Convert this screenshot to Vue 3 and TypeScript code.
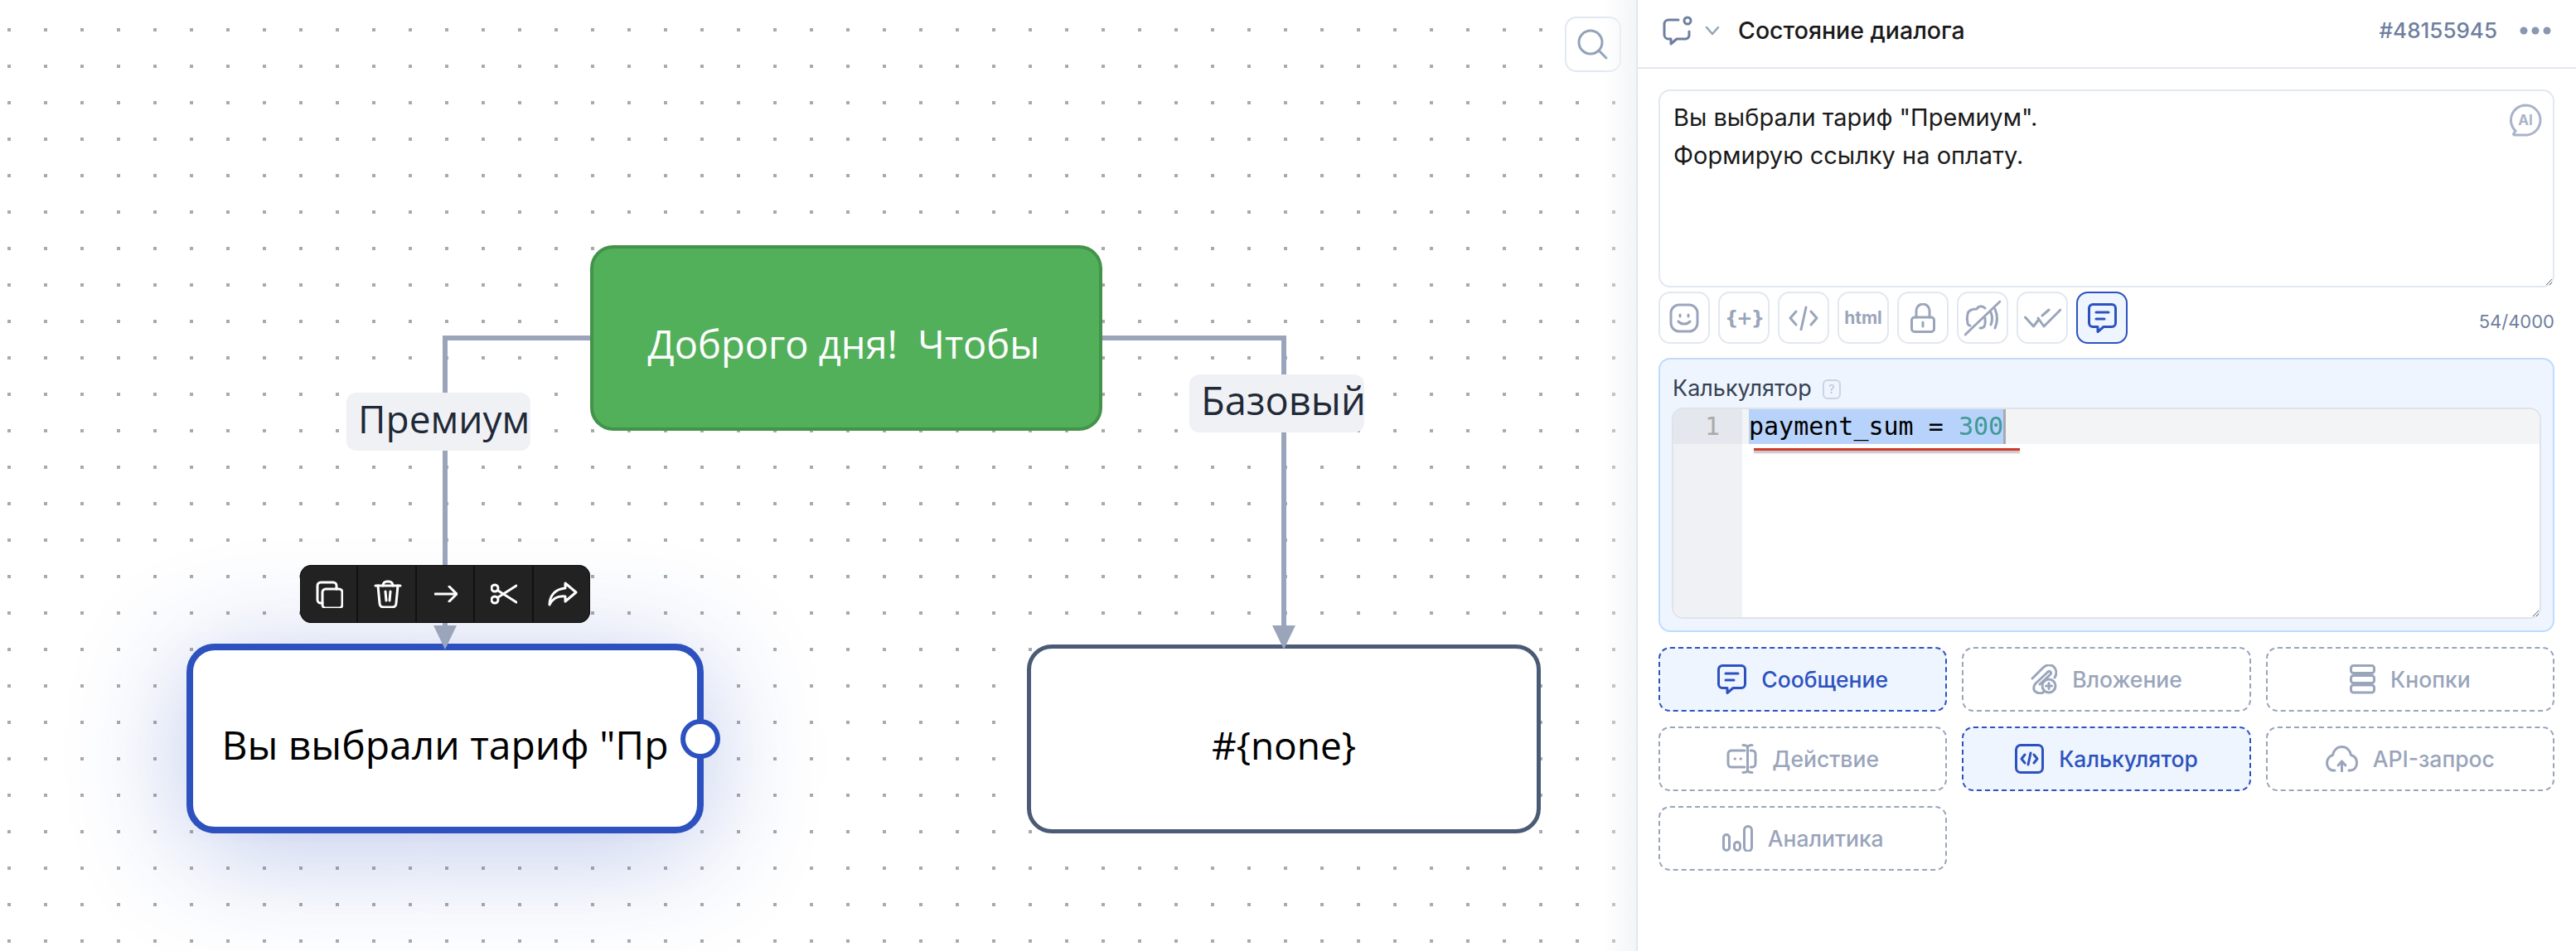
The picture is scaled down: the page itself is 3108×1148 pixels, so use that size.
<script setup lang="ts">
interface Tool { d: string[]; w: number; h: number; t?: string }
interface Block { name: string; on: boolean; w: number; h: number; d: string[]; c?: [number, number, number][] }

const msg = ['M6 1.5h23a4.5 4.5 0 0 1 4.5 4.5v18a4.5 4.5 0 0 1-4.5 4.5H19l-7 6v-6H6A4.5 4.5 0 0 1 1.5 24V6A4.5 4.5 0 0 1 6 1.5z', 'M10 11h15', 'M10 19h10']

const blocks: Block[] = [
  { name: 'Сообщение', on: true, w: 35, h: 36, d: msg },
  { name: 'Вложение', on: false, w: 32, h: 36, d: ['M2 17 15 4c4-4 10-4 13-1s4 8 1 13', 'M21 9 6 23c-3 3-3 8 0 10s7 3 10 0', 'M21 9c1-2 5 0 3 3L11 24'], c: [[22, 26, 8]] },
  { name: 'Кнопки', on: false, w: 31, h: 36, d: ['M4.500 1.500h22a3 3 0 0 1 3 3v3a3 3 0 0 1-3 3h-22a3 3 0 0 1-3-3v-3a3 3 0 0 1 3-3z', 'M4.500 13.500h22a3 3 0 0 1 3 3v3a3 3 0 0 1-3 3h-22a3 3 0 0 1-3-3v-3a3 3 0 0 1 3-3z', 'M4.500 25h22a3 3 0 0 1 3 3v3a3 3 0 0 1-3 3h-22a3 3 0 0 1-3-3v-3a3 3 0 0 1 3-3z'] },
  { name: 'Действие', on: false, w: 37, h: 36, d: ['M22 8H6a4 4 0 0 0-4 4v12a4 4 0 0 0 4 4h16', 'M29 8h2a4 4 0 0 1 4 4v12a4 4 0 0 1-4 4h-2', 'M25.500 3v30', 'M20 1.500c3 0 5 1 5.500 2.500.5-1.500 2.500-2.500 5.500-2.500', 'M20 34.500c3 0 5-1 5.500-2.500.5 1.500 2.500 2.500 5.500 2.500', 'M10 18h.5', 'M17 18h.5'] },
  { name: 'Калькулятор', on: true, w: 35, h: 36, d: ['M7 1.500h21a5.500 5.500 0 0 1 5.500 5.500v22a5.500 5.500 0 0 1-5.500 5.500H7A5.500 5.500 0 0 1 1.500 29V7A5.500 5.500 0 0 1 7 1.500z', 'M12 13l-4 5 4 5', 'M16 25l3-14', 'M23 13l4 5-4 5'] },
  { name: 'API-запрос', on: false, w: 39, h: 32, d: ['M11 30H9.500C4.500 30 1.500 25.500 1.500 21s3-8.500 7-9.500C9.500 5.500 14 1.500 19.500 1.500S29.500 5.500 30.500 11.500c4 1 7 4.500 7 9.500s-3 9-8 9H28', 'M19.500 31V19', 'M15 24l4.500-5 4.500 5'] },
  { name: 'Аналитика', on: false, w: 37, h: 32, d: ['M5 11.500a3.500 3.500 0 0 1 3.500 3.500v12a3.500 3.500 0 0 1-7 0V15A3.500 3.500 0 0 1 5 11.500z', 'M18 20.500a3.500 3.500 0 0 1 3.500 3.500v3a3.500 3.500 0 0 1-7 0v-3a3.500 3.500 0 0 1 3.500-3.500z', 'M31 1.500a4.500 4.500 0 0 1 4.500 4.500v21a4.500 4.500 0 0 1-9 0V6A4.500 4.500 0 0 1 31 1.500z'] },
]

const tools: Tool[] = [
  { w: 36, h: 36, d: ['M12 2h12a10 10 0 0 1 10 10v12a10 10 0 0 1-10 10H12A10 10 0 0 1 2 24V12A10 10 0 0 1 12 2z', 'M13 14v2', 'M23 14v2', 'M11 22c3 4 11 4 14 0'] },
  { w: 36, h: 30, d: [], t: '{+}' },
  { w: 36, h: 30, d: ['M9 7 2 15l7 8', 'M27 7l7 8-7 8', 'M21 2l-6 27'] },
  { w: 0, h: 0, d: [], t: 'html' },
  { w: 30, h: 36, d: ['M5 17h20a3.500 3.500 0 0 1 3.500 3.500v10A3.500 3.500 0 0 1 25 34.500H5A3.500 3.500 0 0 1 1.500 31V20.500A3.500 3.500 0 0 1 5 17z', 'M7 17V9a8 8 0 0 1 16 0v8', 'M15 23v5'] },
  { w: 44, h: 44, d: ['M25 10c-3-3-8-3-10 1-4 0-10 1-11 6-1 4-1 7 0 11 0 2 2 3 3 3', 'M25 22c0 4 1 7-1 10-1 2-3 2-5 2', 'M32 15c2 5 2 10 0 15', 'M37 11c3 7 3 16 0 23', 'M43 2 1 42'] },
  { w: 45, h: 24, d: ['M1.500 11l10 11 6-8', 'M17 12l7 10L44 2', 'M22 9l8-7'] },
]

const actions: { w: number; h: number; d: string[]; c?: [number, number, number][] }[] = [
  { w: 33, h: 33, d: ['M12 10h16a4 4 0 0 1 4 4v15a4 4 0 0 1-4 4H12a4 4 0 0 1-4-4V14a4 4 0 0 1 4-4z', 'M8 27H6a4 4 0 0 1-4-4V6a4 4 0 0 1 4-4h15a4 4 0 0 1 4 4v4'] },
  { w: 34, h: 34, d: ['M2 7h30', 'M11 7c0-3 2-5 5-5h2c3 0 5 2 5 5', 'M5 7l2 21c0 3 2 5 5 5h10c3 0 5-2 5-5l2-21', 'M14 14l1 11', 'M20 14l-1 11'] },
  { w: 28, h: 20, d: ['M1 10h26', 'M18 1l9 9-9 9'] },
  { w: 32, h: 26, d: ['M9 9l22 14', 'M9 17 31 3'], c: [[5, 6, 4], [5, 20, 4]] },
  { w: 36, h: 30, d: ['M21 2l13 11-13 11v-6C12 17 6 20 2 28 2 18 8 9 21 8z'] },
]

const textLines = ['Вы выбрали тариф "Премиум".', 'Формирую ссылку на оплату.']
</script>

<template>
  <div class="app">
    <main class="canvas">
      <div class="node node-green"><span>Доброго дня!&nbsp; Чтобы</span></div>
      <div class="node node-selected"><span>Вы выбрали тариф "Пр</span></div>
      <div class="node node-plain"><span>#{none}</span></div>

      <svg class="wires" width="1975" height="1148" viewBox="0 0 1975 1148" fill="none">
        <path d="M712 408H537V760M1330 408H1549V760" stroke="#9aa5bb" stroke-width="6" />
        <path d="M523 755h28l-14 29zM1535 755h28l-14 29z" fill="#9aa5bb" />
      </svg>

      <div class="port"></div>
      <div class="edge-label label-a">Премиум</div>
      <div class="edge-label label-b">Базовый</div>

      <div class="actions">
        <button v-for="(a, i) in actions" :key="i" class="action" type="button">
          <svg :width="a.w" :height="a.h" :viewBox="`0 0 ${a.w} ${a.h}`" fill="none" stroke="#fff" stroke-width="3" stroke-linecap="round" stroke-linejoin="round">
            <path v-for="d in a.d" :key="d" :d="d" />
            <circle v-for="c in a.c" :key="c[1]" :cx="c[0]" :cy="c[1]" :r="c[2]" />
          </svg>
        </button>
      </div>

      <button class="search" type="button">
        <svg width="40" height="40" viewBox="0 0 40 40" fill="none" stroke="#94a3b8" stroke-width="3" stroke-linecap="round">
          <circle cx="17" cy="17" r="14" />
          <path d="M27 27l9 9" />
        </svg>
      </button>
      <div class="fade"></div>
    </main>

    <aside class="panel">
      <header class="head">
        <svg class="head-icon" width="36" height="36" viewBox="0 0 36 36" fill="none" stroke="#6f7f9f" stroke-width="3" stroke-linecap="round" stroke-linejoin="round">
          <path d="M19 5H7a5 5 0 0 0-5 5v13a5 5 0 0 0 5 5h3v6l7-6h11a5 5 0 0 0 4-4v-5" />
          <circle cx="30" cy="6" r="4" />
        </svg>
        <svg class="chev" width="18" height="12" viewBox="0 0 18 12" fill="none" stroke="#94a3b8" stroke-width="2.500" stroke-linecap="round" stroke-linejoin="round">
          <path d="M2 2l7 8 7-8" />
        </svg>
        <span class="title">Состояние диалога</span>
        <span class="id">#48155945</span>
        <svg class="more" width="38" height="10" viewBox="0 0 38 10" fill="#8a97b1">
          <circle cx="5" cy="5" r="4.500" /><circle cx="19" cy="5" r="4.500" /><circle cx="33" cy="5" r="4.500" />
        </svg>
      </header>

      <div class="body">
        <div class="message">
          <p v-for="l in textLines" :key="l">{{ l }}</p>
          <svg class="ai" width="40" height="40" viewBox="0 0 40 40" fill="none" stroke="#a9b4c8" stroke-width="3" stroke-linecap="round">
            <path d="M20 2a18 18 0 0 1 0 36H7c-1 0-2-1-1-2l2-3A18 18 0 0 1 20 2z" />
            <text x="20" y="26" text-anchor="middle" class="ai-text">AI</text>
          </svg>
        </div>

        <div class="toolbar">
          <button v-for="(t, i) in tools" :key="i" class="tool" type="button">
            <span v-if="t.t" :class="t.t === 'html' ? 'html' : 'braces'">{{ t.t }}</span>
            <svg v-else :width="t.w" :height="t.h" :viewBox="`0 0 ${t.w} ${t.h}`" fill="none" stroke="#9aa5bb" stroke-width="3" stroke-linecap="round" stroke-linejoin="round">
              <path v-for="d in t.d" :key="d" :d="d" />
            </svg>
          </button>
          <button class="tool tool-on" type="button">
            <svg width="35" height="36" viewBox="0 0 35 36" fill="none" stroke="#2d52c0" stroke-width="3" stroke-linecap="round" stroke-linejoin="round">
              <path v-for="d in msg" :key="d" :d="d" />
            </svg>
          </button>
          <span class="count">54/4000</span>
        </div>

        <section class="calc">
          <div class="calc-label">
            Калькулятор
            <span class="help">?</span>
          </div>
          <div class="editor">
            <div class="gutter"><div class="gutter-line">1</div></div>
            <div class="code">
              <div class="code-line"><span class="sel">payment_sum = <span class="num">300</span></span></div>
              <div class="squiggle"></div>
            </div>
          </div>
        </section>

        <div class="blocks">
          <button v-for="b in blocks" :key="b.name" class="block" :class="{ 'block-on': b.on }" type="button">
            <svg :width="b.w" :height="b.h" :viewBox="`0 0 ${b.w} ${b.h}`" fill="none" stroke="currentColor" stroke-width="3" stroke-linecap="round" stroke-linejoin="round">
              <path v-for="d in b.d" :key="d" :d="d" />
              <template v-if="b.c">
                <circle v-for="c in b.c" :key="c[1]" :cx="c[0]" :cy="c[1]" :r="c[2]" fill="#fff" />
                <path d="M22 22.500v7M18.500 26h7" />
              </template>
            </svg>
            <span>{{ b.name }}</span>
          </button>
        </div>
      </div>
    </aside>
  </div>
</template>

<style>
html, body { margin: 0; overflow: hidden; background: #fff; }
</style>

<style scoped>
.app {
  width: 3108px;
  height: 1148px;
  display: flex;
  overflow: hidden;
  font-family: Inter, "Noto Sans", sans-serif;
  color: #1a1a1a;
}
button { font: inherit; padding: 0; cursor: pointer; }
p { margin: 0; }

.canvas {
  position: relative;
  flex: 0 0 1974px;
  background-color: #fff;
  background-image: conic-gradient(at 4px 4px, transparent 75%, #aaa 0);
  background-size: 44px 44px;
  background-position: 9px 34px;
  overflow: hidden;
}
.fade {
  position: absolute;
  top: 0;
  right: 0;
  bottom: 0;
  width: 40px;
  background: linear-gradient(90deg, rgba(243, 245, 247, 0), #f3f5f7);
  pointer-events: none;
}
.wires { position: absolute; left: 0; top: 0; }
.node {
  position: absolute;
  box-sizing: border-box;
  display: flex;
  align-items: center;
  justify-content: center;
  padding-top: 14px;
  background: #fff;
  font: 47px "Open Sans", sans-serif;
  color: #000;
  white-space: nowrap;
}
.node-green {
  left: 712px; top: 296px; width: 618px; height: 224px;
  padding-right: 6px;
  background: #53b05a;
  border: 4px solid #43934a;
  border-radius: 28px;
  color: #fff;
}
.node-selected {
  left: 225px; top: 777px; width: 624px; height: 229px;
  border: 8px solid #2d52c0;
  border-radius: 34px;
  font-size: 48px;
  box-shadow: 0 20px 140px rgba(45, 82, 192, 0.32);
}
.node-plain {
  left: 1239px; top: 778px; width: 620px; height: 228px;
  border: 5px solid #4b5a75;
  border-radius: 30px;
  font-size: 46px;
}
.port {
  position: absolute;
  left: 821px; top: 868px;
  box-sizing: border-box;
  width: 48px; height: 48px;
  border: 6px solid #2d52c0;
  border-radius: 50%;
  background: #fff;
}
.edge-label {
  position: absolute;
  box-sizing: border-box;
  height: 70px;
  padding: 0 0 8px 14px;
  display: flex;
  align-items: center;
  background: #f0f1f5;
  border-radius: 12px;
  font: 46px "Open Sans", sans-serif;
  color: #1f2937;
  white-space: nowrap;
}
.label-a { left: 418px; top: 474px; width: 222px; }
.label-b { left: 1435px; top: 452px; width: 211px; font-size: 47px; }
.actions {
  position: absolute;
  left: 362px; top: 682px;
  display: flex;
  width: 350px; height: 70px;
  background: #222;
  border-radius: 14px;
  overflow: hidden;
  box-shadow: inset 0 0 0 1px #111;
}
.action {
  flex: 1;
  display: flex;
  align-items: center;
  justify-content: center;
  padding-left: 2px;
  background: none;
  border: 0;
  border-right: 2px solid #111;
}
.action:last-child { border-right: 0; }
.search {
  position: absolute;
  left: 1888px; top: 20px;
  box-sizing: border-box;
  width: 68px; height: 67px;
  display: flex;
  align-items: center;
  justify-content: center;
  background: #fff;
  border: 2px solid #e2e8f0;
  border-radius: 14px;
}

.panel {
  flex: 1;
  box-sizing: border-box;
  border-left: 2px solid #e2e8f0;
  background: #fff;
  display: flex;
  flex-direction: column;
}
.head {
  box-sizing: border-box;
  height: 83px;
  flex: none;
  display: flex;
  align-items: center;
  padding: 0 30px 8px 30px;
  border-bottom: 2px solid #e2e8f0;
}
.chev { margin-left: 15px; }
.title { margin-left: 22px; font-size: 28.5px; font-weight: 500; color: #1a1a1a; }
.id { margin-left: auto; font-size: 26px; font-weight: 500; color: #6f7f9f; }
.more { margin-left: 27px; }
.body {
  padding: 25px 26px 0 25px;
  display: flex;
  flex-direction: column;
}
.message {
  position: relative;
  box-sizing: border-box;
  height: 239px;
  padding: 9px 16px;
  border: 2px solid #e2e8f0;
  border-radius: 14px;
  font-size: 29px;
  line-height: 46px;
  color: #1a1a1a;
  overflow: hidden;
  resize: vertical;
}
.ai { position: absolute; right: 13px; top: 15px; }
.ai-text { font: 700 17px Inter, sans-serif; fill: #a9b4c8; stroke: none; }
.toolbar {
  margin-top: 5px;
  display: flex;
  align-items: center;
  gap: 10px;
}
.tool {
  box-sizing: border-box;
  width: 62px;
  height: 63px;
  display: flex;
  align-items: center;
  justify-content: center;
  background: #fff;
  border: 2px solid #e2e8f0;
  border-radius: 14px;
  color: #9aa5bb;
}
.tool-on { background: #eef5fe; border-color: #2d52c0; }
.html { font-size: 21px; font-weight: 700; }
.braces { font: 700 23px "DejaVu Sans", sans-serif; letter-spacing: -2px; }
.count { margin: 8px 0 0 auto; font-size: 22px; color: #6f7f9f; }
.calc {
  box-sizing: border-box;
  margin-top: 17px;
  height: 331px;
  padding: 20px 14px 14px;
  background: #eef5fe;
  border: 2px solid #bfdbfe;
  border-radius: 14px;
}
.calc-label {
  height: 36px;
  margin: 0 0 2px 1px;
  display: flex;
  align-items: flex-start;
  font-size: 27px;
  line-height: 30px;
  color: #374151;
}
.help {
  margin: 4px 0 0 13px;
  box-sizing: border-box;
  width: 22px; height: 24px;
  display: flex;
  align-items: center;
  justify-content: center;
  border: 2px solid #cbd5e1;
  border-radius: 6px;
  font-size: 14px;
  color: #b6c2d4;
}
.editor {
  position: relative;
  box-sizing: border-box;
  height: 255px;
  display: flex;
  background: #fff;
  border: 2px solid #e0e3e8;
  border-radius: 14px;
  overflow: hidden;
  resize: vertical;
  font: 30px/42px "DejaVu Sans Mono", monospace;
}
.gutter { flex: 0 0 83px; background: #eff1f5; }
.gutter-line {
  height: 42px;
  padding-right: 27px;
  text-align: right;
  background: #e4e7ed;
  color: #aaa;
}
.code { position: relative; flex: 1; }
.code-line { height: 42px; padding-left: 8px; background: #f3f4f6; white-space: pre; color: #000; }
.sel { display: inline-block; height: 42px; background: #b8d3fb; border-right: 3px solid #aaa; }
.num { color: #3f9a96; }
.squiggle {
  position: absolute;
  left: 14px; top: 47px;
  width: 321px; height: 3px;
  background: #d0392b;
  box-shadow: 0 3px 2px rgba(0, 0, 0, 0.25);
}
.blocks {
  margin-top: 18px;
  display: grid;
  grid-template-columns: repeat(3, 1fr);
  grid-auto-rows: 78px;
  gap: 18px;
}
.block {
  display: flex;
  align-items: center;
  justify-content: center;
  gap: 18px;
  background: #fff;
  border: 2px dashed #9aa5bb;
  border-radius: 14px;
  font-size: 26.5px;
  font-weight: 500;
  color: #9aa5bb;
}
.block-on { background: #eef5fe; border-color: #2d52c0; color: #2d52c0; }
</style>
